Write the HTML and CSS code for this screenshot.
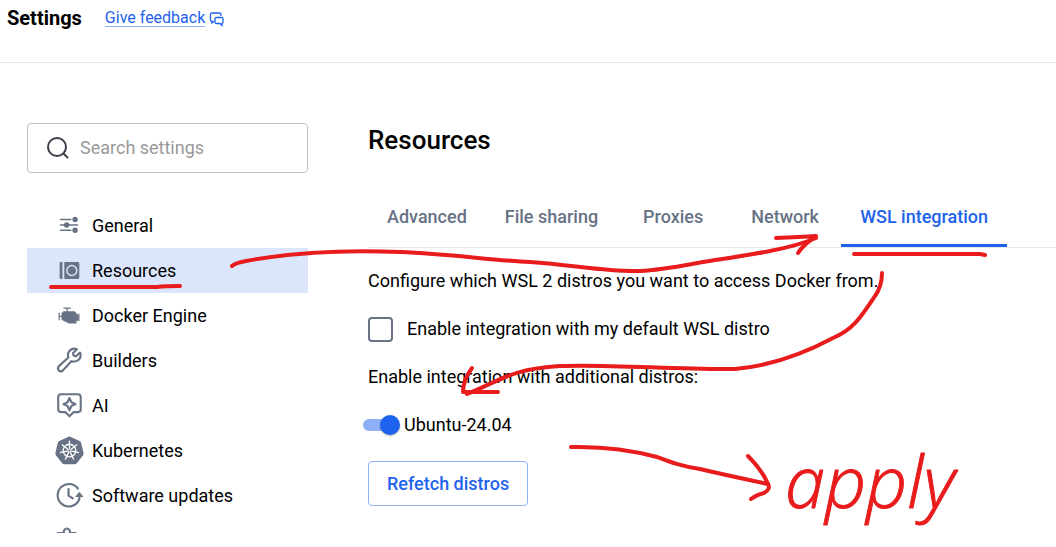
FILE: index.html
```html
<!DOCTYPE html>
<html lang="en">
  <head>
    <title>Settings</title>
    <meta charset="utf-8">
    <meta name="viewport" content="width=device-width, initial-scale=1">
    <link rel="stylesheet" href="styles.css">
  </head>
  <body>

  <header class="topbar">
    <h1 class="topbar-title">Settings</h1>
    <a class="feedback" href="#feedback">
      <span class="feedback-text">Give feedback</span>
      <svg class="feedback-icon" viewBox="0 0 16 16" aria-hidden="true">
        <path d="M5 10.5H4.500L3 12V10.500Q1.500 10.500 1.500 9V3.500Q1.500 2 3 2H10.500Q12 2 12 3.500V5"/>
        <path d="M7.500 6.500H12.500Q14 6.500 14 8V11Q14 12.500 13 12.500V14.500L11 12.500H7.500Q6 12.500 6 11V8Q6 6.500 7.500 6.500Z"/>
      </svg>
    </a>
  </header>

  <div class="layout">
    <aside class="sidebar">
      <label class="search">
        <svg class="search-icon" viewBox="0 0 24 24" aria-hidden="true">
          <circle cx="11" cy="11" r="9"/>
          <path d="M17.500 17.500L22 22"/>
        </svg>
        <input class="search-input" type="text" placeholder="Search settings" aria-label="Search settings">
      </label>

      <nav class="menu">
        <a class="menu-item" href="#general">
          <svg class="menu-icon" viewBox="0 0 32 32" aria-hidden="true">
            <path class="line" d="M7 9H18M7 15H25M7 20.500H18" stroke-width="1.700"/>
            <circle cx="22.500" cy="9" r="2.900"/>
            <circle cx="13.500" cy="15" r="2.900"/>
            <circle cx="22.500" cy="20.500" r="2.900"/>
          </svg>
          General
        </a>
        <a class="menu-item active" href="#resources">
          <svg class="menu-icon" viewBox="0 0 32 32" aria-hidden="true">
            <path d="M7.500 6.500H9V24.500H7.500Q6 24.500 6 23V8Q6 6.500 7.500 6.500ZM11 6.500H25.500Q27 6.500 27 8V23Q27 24.500 25.500 24.500H11Z"/>
            <circle class="cut" cx="19" cy="15.500" r="5.300"/>
            <circle cx="19" cy="15.500" r="2"/>
          </svg>
          Resources
        </a>
        <a class="menu-item" href="#engine">
          <svg class="menu-icon" viewBox="0 0 32 32" aria-hidden="true">
            <path class="line" d="M10.500 7.500H17.500M14 7.500V11M5.500 13V20M5.500 16.500H9M26.500 14V21" stroke-width="1.300"/>
            <path d="M10 11H22L24 13V14H26V21H24V24H16L12 22L8 20V13Z"/>
          </svg>
          Docker Engine
        </a>
        <a class="menu-item" href="#builders">
          <svg class="menu-icon" viewBox="0 0 32 32" aria-hidden="true">
            <path class="line" d="M24.500 3.500C20.500 1.500 16 4 15 8Q14.600 10 15.300 12.200L5.200 21.500Q3.200 24 5 26Q7.200 28 9.500 26L18.500 16.200C23 17.700 28 15 28.400 10.500Q28.600 8.500 27.700 7L23.500 11L20.800 10.200L20.300 7.500Z" stroke-width="2.300"/>
          </svg>
          Builders
        </a>
        <a class="menu-item" href="#ai">
          <svg class="menu-icon" viewBox="0 0 32 32" aria-hidden="true">
            <path class="line" d="M7.500 3.500H25.500Q28.500 3.500 28.500 6.500V19.500Q28.500 22.500 25.500 22.500H21L16.500 27L12 22.500H7.500Q4.500 22.500 4.500 19.500V6.500Q4.500 3.500 7.500 3.500Z" stroke-width="2.200"/>
            <path class="line" d="M16.500 7.500L18.500 12L23 14L18.500 16L16.500 20.500L14.500 16L10 14L14.500 12Z" stroke-width="2.200"/>
          </svg>
          AI
        </a>
        <a class="menu-item" href="#kubernetes">
          <svg class="menu-icon" viewBox="0 0 32 32" aria-hidden="true">
            <path d="M15 1Q16.500 0.300 18 1L27.300 5.400Q28.600 6.100 29 7.500L31.500 18Q31.700 19.500 30.800 20.700L24.300 29Q23.300 30 21.800 30H11.200Q9.700 30 8.700 29L2.200 20.700Q1.300 19.500 1.500 18L4 7.500Q4.400 6.100 5.700 5.400Z"/>
            <g class="wheel">
              <circle cx="16.500" cy="15.500" r="6.700"/>
              <path d="M16.500 5V13.500M16.500 15.500L24.700 9M16.500 15.500L26.700 17.800M16.500 15.500L21 25M16.500 15.500L12 25M16.500 15.500L6.300 17.800M16.500 15.500L8.300 9"/>
            </g>
            <circle cx="16.500" cy="15.500" r="1.200"/>
          </svg>
          Kubernetes
        </a>
        <a class="menu-item" href="#updates">
          <svg class="menu-icon" viewBox="0 0 32 32" aria-hidden="true">
            <path class="line" d="M25.500 8A12 12 0 1 0 25 23Q27.500 20 27.500 15.500M15.500 8.500V15.500L20 18.500" stroke-width="2.300"/>
            <path d="M22.500 17L27 11.500L31.500 17Z"/>
          </svg>
          Software updates
        </a>
        <a class="menu-item" href="#extensions" aria-label="Extensions">
          <svg class="menu-icon" viewBox="0 0 32 32" aria-hidden="true">
            <path class="line" d="M4 27V7.500H10.500C9.500 1 18 1 17 7.500H23V14C30 13.500 30 20.500 23 20V27Z" stroke-width="2.300"/>
          </svg>
        </a>
      </nav>
    </aside>

    <main class="content">
      <h2 class="content-title">Resources</h2>

      <nav class="tabs">
        <a class="tab" href="#advanced">Advanced</a>
        <a class="tab" href="#file-sharing">File sharing</a>
        <a class="tab" href="#proxies">Proxies</a>
        <a class="tab" href="#network">Network</a>
        <a class="tab active" href="#wsl">WSL integration</a>
      </nav>

      <div class="panel">
        <p class="text">Configure which WSL 2 distros you want to access Docker from.</p>
        <label class="option">
          <input class="checkbox" type="checkbox">
          Enable integration with my default WSL distro
        </label>
        <p class="text">Enable integration with additional distros:</p>
        <label class="distro">
          <input class="switch" type="checkbox" role="switch" checked>
          Ubuntu-24.04
        </label>
        <button class="button" type="button">Refetch distros</button>
      </div>
    </main>
  </div>

  <!-- pen marks over the page -->
  <svg class="ink" width="1056" height="547" viewBox="0 0 1056 547">
    <path d="M51 287H157Q165 286 180 286"/>
    <path d="M232 266Q235 263 246 261C300 251 350 250 400 252C450 254 490 260 530 262C575 265 605 272 640 271C665 270 690 264 715 260C755 254 790 249 816 238"/>
    <path d="M776 238Q800 237 816 236Q803 245 798 253"/>
    <path d="M854 254H980L985 255"/>
    <path d="M882 273Q882 286 875 296C861 317 853 330 833 338C805 353 770 366 735 369C680 370 610 364 560 366C510 369 500 381 467 394"/>
    <path d="M472 368Q463 380 463 392H498"/>
    <path d="M571 447C610 446 635 451 657 457C670 462 680 466 700 469C725 475 745 479 768 484"/>
    <path d="M748 456Q762 470 768 484Q771 489 764 493Q756 495 751 499"/>
    <text class="ink-text" x="785" y="508">apply</text>
  </svg>

  </body>
</html>
```
FILE: styles.css
```css
* {
  box-sizing: border-box;
}

body {
  margin: 0;
  height: 100vh;
  display: flex;
  flex-direction: column;
  overflow: hidden;
  position: relative;
  background: #fff;
  color: #000;
  font-family: Roboto, "Liberation Sans", sans-serif;
  font-size: 18px;
  line-height: 24px;
}

h1, h2, p {
  margin: 0;
}

a {
  text-decoration: none;
}

.topbar {
  display: flex;
  align-items: flex-start;
  gap: 23px;
  padding: 6px 7px 32px;
  border-bottom: 1px solid #e8e8e8;
}

.topbar-title {
  font-size: 20px;
  font-weight: 700;
  line-height: 24px;
}

.feedback {
  display: flex;
  align-items: flex-end;
  gap: 4px;
  padding-top: 3px;
  color: #1d63ed;
  font-size: 16px;
}

.feedback-text {
  border-bottom: 1px solid #8fb1f6;
  line-height: 17px;
}

.feedback-icon {
  width: 16px;
  height: 16px;
  fill: none;
  stroke: currentColor;
  stroke-width: 1.3;
}

.layout {
  flex: 1;
  min-height: 0;
  display: flex;
  gap: 60px;
  padding: 60px 0 14px 27px;
}

.sidebar {
  flex: none;
  width: 281px;
  display: flex;
  flex-direction: column;
  gap: 30px;
}

.search {
  flex: none;
  display: flex;
  align-items: center;
  gap: 10px;
  height: 50px;
  padding: 0 18px;
  border: 1px solid #bfbfbf;
  border-radius: 4px;
}

.search-icon {
  flex: none;
  width: 24px;
  height: 24px;
  fill: none;
  stroke: #393f49;
  stroke-width: 2;
}

.search-input {
  flex: 1;
  min-width: 0;
  padding: 0;
  border: 0;
  outline: 0;
  background: none;
  font: inherit;
}

.search-input::placeholder {
  color: #999;
}

.menu {
  min-height: 0;
  overflow: hidden;
}

.menu-item {
  display: flex;
  align-items: center;
  gap: 8px;
  height: 45px;
  padding: 0 27px;
  color: #000;
}

.menu-item.active {
  background: #dbe5fc;
}

.menu-icon {
  flex: none;
  width: 30px;
  height: 30px;
  fill: #677285;
}

.menu-icon .line {
  fill: none;
  stroke: #677285;
  stroke-linejoin: round;
  stroke-linecap: round;
}

.menu-icon .cut {
  fill: none;
  stroke: #dbe5fc;
  stroke-width: 1.5;
}

.menu-icon .wheel {
  fill: none;
  stroke: #fff;
  stroke-width: 1.4;
}

.content {
  flex: 1;
  min-width: 0;
}

.content-title {
  font-size: 26px;
  font-weight: 500;
  line-height: 34px;
}

.tabs {
  display: flex;
  margin-top: 30px;
  border-bottom: 1px solid #e8e8e8;
}

.tab {
  min-width: 112px;
  padding: 18px 19px 15px;
  border-bottom: 3px solid transparent;
  color: #677285;
  font-weight: 500;
  text-align: center;
  white-space: nowrap;
}

.tab.active {
  border-color: #1d63ed;
  color: #1d63ed;
}

.panel {
  display: flex;
  flex-direction: column;
  align-items: flex-start;
  gap: 24px;
  padding-top: 21px;
}

.option {
  display: flex;
  align-items: center;
  gap: 14px;
  height: 24px;
}

.checkbox {
  appearance: none;
  width: 25px;
  height: 25px;
  margin: 0;
  border: 2px solid #677285;
  border-radius: 4px;
}

.distro {
  display: flex;
  align-items: center;
  gap: 4px;
  margin-left: -5px;
}

/* ::before is the track, ::after the knob */
.switch {
  appearance: none;
  display: flex;
  align-items: center;
  width: 37px;
  height: 20px;
  margin: 0;
}

.switch::before {
  content: "";
  width: 34px;
  height: 12px;
  border-radius: 6px;
  background: #8eb1f6;
}

.switch::after {
  content: "";
  width: 20px;
  height: 20px;
  margin-left: -17px;
  border-radius: 50%;
  background: #1d63ed;
  box-shadow: 0 1px 2px rgba(0, 0, 0, 0.3);
}

.button {
  height: 45px;
  padding: 0 18px;
  border: 1px solid #8eb1f6;
  border-radius: 4px;
  background: #fff;
  color: #1d63ed;
  font: inherit;
  font-weight: 500;
  line-height: 20px;
}

.ink {
  position: absolute;
  top: 0;
  left: 0;
  pointer-events: none;
  fill: none;
  stroke: #e81c1c;
  stroke-width: 4;
  stroke-linecap: round;
  stroke-linejoin: round;
}

.ink-text {
  fill: #e81c1c;
  stroke-width: 1;
  font-family: "Open Sans", "Noto Sans", sans-serif;
  font-size: 72px;
  font-style: italic;
  font-weight: 300;
}
```
